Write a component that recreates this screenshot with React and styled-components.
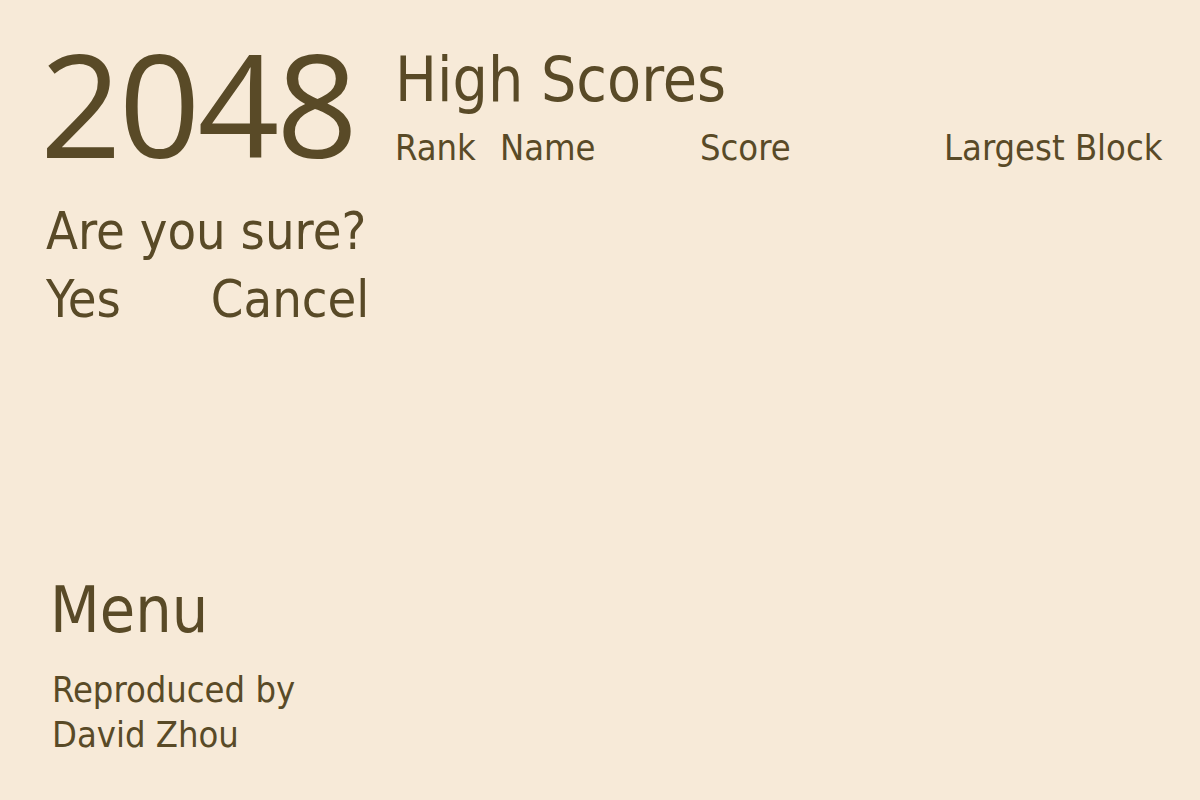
import styled, { createGlobalStyle } from 'styled-components';

const GlobalStyle = createGlobalStyle`
    html, body {
        margin: 0;
        padding: 0;
        background-color: #f7ead8;
    }
    body {
        font-family: "DejaVu Sans Condensed", "DejaVu Sans", sans-serif;
        color: #594a27;
    }
`;

const Page = styled.div`
    width: 1200px;
    height: 800px;
    box-sizing: border-box;
    padding: 28px 0 0 40px;
    display: flex;
    flex-direction: column;
    overflow: hidden;
`;

const Top = styled.div`
    display: flex;
    align-items: flex-start;
`;

const Logo = styled.h1`
    margin: 0;
    font-family: "Open Sans", "Noto Sans", sans-serif;
    font-weight: 400;
    font-size: 143px;
    line-height: 150px;
    letter-spacing: -3px;
    width: 355px;
    flex-shrink: 0;
`;

const Scores = styled.div`
    display: flex;
    flex-direction: column;
    padding-top: 16px;
`;

const ScoresTitle = styled.h2`
    margin: 0;
    font-weight: 400;
    font-size: 62px;
    line-height: 72px;
`;

const HeaderRow = styled.div`
    display: grid;
    grid-template-columns: 105px 200px 244px auto;
    font-size: 36px;
    line-height: 44px;
    margin-top: 10px;
`;

const Confirm = styled.div`
    margin-top: 20px;
    padding-left: 6px;
    display: flex;
    flex-direction: column;
`;

const Question = styled.div`
    font-size: 52px;
    line-height: 66px;
`;

const Choices = styled.div`
    display: flex;
    gap: 90px;
    font-size: 52px;
    line-height: 70px;
`;

const Choice = styled.span`
    cursor: pointer;
`;

const Footer = styled.div`
    margin-top: auto;
    padding: 0 0 43px 10px;
    display: flex;
    flex-direction: column;
`;

const MenuLink = styled.div`
    font-size: 64px;
    line-height: 80px;
    cursor: pointer;
`;

const Credit = styled.div`
    font-size: 36px;
    line-height: 45px;
    margin-top: 17px;
    padding-left: 2px;
`;

export default function App() {
    return (
        <>
            <GlobalStyle />
            <Page>
                <Top>
                    <Logo>2048</Logo>
                    <Scores>
                        <ScoresTitle>High Scores</ScoresTitle>
                        <HeaderRow>
                            <span>Rank</span>
                            <span>Name</span>
                            <span>Score</span>
                            <span>Largest Block</span>
                        </HeaderRow>
                    </Scores>
                </Top>
                <Confirm>
                    <Question>Are you sure?</Question>
                    <Choices>
                        <Choice>Yes</Choice>
                        <Choice>Cancel</Choice>
                    </Choices>
                </Confirm>
                <Footer>
                    <MenuLink>Menu</MenuLink>
                    <Credit>Reproduced by<br />David Zhou</Credit>
                </Footer>
            </Page>
        </>
    );
}
